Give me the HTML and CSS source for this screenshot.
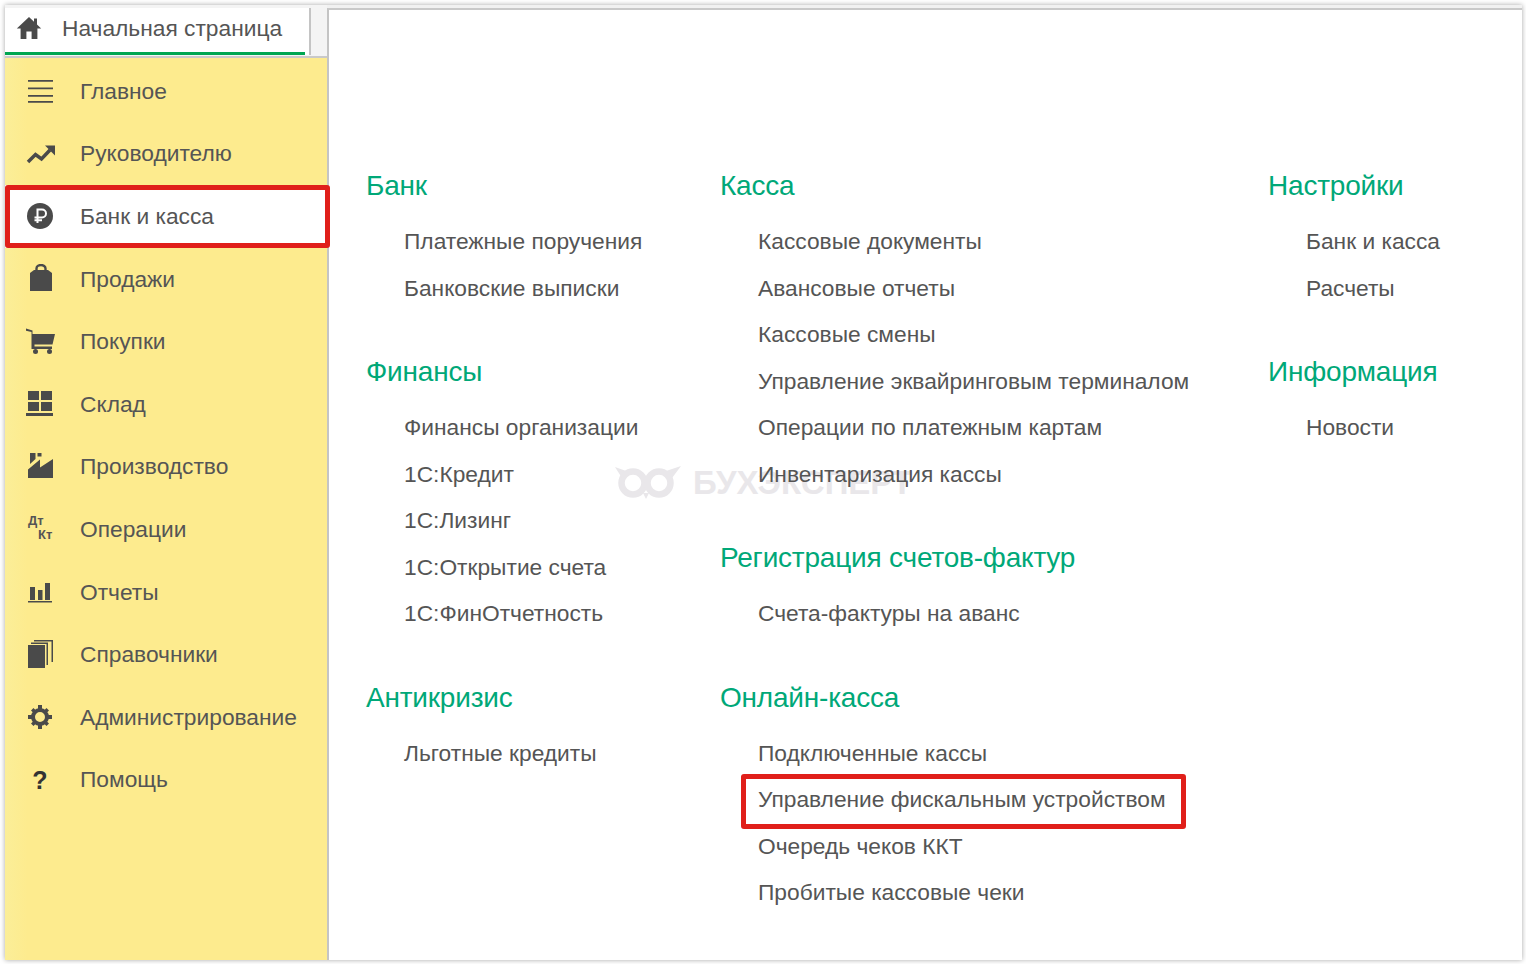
FILE: index.html
```html
<!DOCTYPE html>
<html lang="en">
<head>
  <meta charset="UTF-8">
  <title>Начальная страница</title>
  <link rel="stylesheet" href="styles.css">
</head>
<body>
  <div class="window">
    <!-- Left side: tab and sections -->
    <div class="side">
      <div class="tabs">
        <div class="tab">
          <svg class="home-icon" viewBox="0 0 26 24"><path d="M13 1 0.8 12.5H4.6V23H10.4V15.5H15.6V23H21.4V12.5H25.2L21 8.5V2.500H18V5.700Z"/></svg>
          <span>Начальная страница</span>
        </div>
      </div>
      <ul class="nav">
        <li class="nav-item">
          <svg class="nav-icon" viewBox="0 0 30 30"><path d="M3 4H28V5.800H3ZM3 11.500H28V13.300H3ZM3 19H28V20.800H3ZM3 25H28V26.800H3Z"/></svg>
          Главное
        </li>
        <li class="nav-item">
          <svg class="nav-icon" viewBox="0 0 30 30"><path d="M3 23 10.500 15.500 16.500 20 25 11" fill="none" stroke="#4a4a4a" stroke-width="3.500"/><path d="M20 6.500H30V16.500Z"/></svg>
          Руководителю
        </li>
        <li class="nav-item nav-active">
          <svg class="nav-icon" viewBox="0 0 30 30"><circle cx="15" cy="15" r="13"/><path d="M12.500 22V8.500H17a4 4 0 0 1 0 8H9.500M9.500 19.300H17" fill="none" stroke="#fff" stroke-width="2"/></svg>
          Банк и касса
        </li>
        <li class="nav-item">
          <svg class="nav-icon" viewBox="0 0 30 30"><path d="M5 9 9 6H23L27 9V27H5Z"/><path d="M11.500 9V4.500a4.500 3.500 0 0 1 9 0V9" fill="none" stroke="#4a4a4a" stroke-width="2.400"/></svg>
          Продажи
        </li>
        <li class="nav-item">
          <svg class="nav-icon" viewBox="0 0 30 30"><path d="M1 1.500 7.500 3.500V7H30L27.500 17.500H9.500V19.500H27V22H6.500V5L1 3.800Z"/><circle cx="10.500" cy="24.500" r="2.500"/><circle cx="24.500" cy="24.500" r="2.500"/></svg>
          Покупки
        </li>
        <li class="nav-item">
          <svg class="nav-icon" viewBox="0 0 30 30"><path d="M3 2H14V11H3ZM16 2H27V11H16ZM3 13H14V22H3ZM16 13H27V22H16ZM1 24H28V27H1Z"/></svg>
          Склад
        </li>
        <li class="nav-item">
          <svg class="nav-icon" viewBox="0 0 30 30"><path d="M5 1H10.500V7L5 12ZM12.500 1H16.500V4.500H12.500ZM3 26V17.500L15 7.500V15.500L28 7V26Z"/></svg>
          Производство
        </li>
        <li class="nav-item">
          <span class="nav-icon debit-credit"><b>Дт</b><b class="credit">Кт</b></span>
          Операции
        </li>
        <li class="nav-item">
          <svg class="nav-icon" viewBox="0 0 30 30"><path d="M5 10H10V23H5ZM13 13H17.500V23H13ZM20 6H25V23H20ZM3 24H27V25.600H3Z"/></svg>
          Отчеты
        </li>
        <li class="nav-item">
          <svg class="nav-icon" viewBox="0 0 30 30"><path d="M3 5H20V28H3ZM6 2.500H23V25H21.500V4H6ZM9 0H28V22H26.500V1.500H9Z"/></svg>
          Справочники
        </li>
        <li class="nav-item">
          <svg class="nav-icon" viewBox="0 0 30 30"><circle cx="15" cy="15" r="7" fill="none" stroke="#4a4a4a" stroke-width="4"/><path d="M13 3H17V7H13ZM13 23H17V27H13ZM3 13H7V17H3ZM23 13H27V17H23ZM6 8.500 8.500 6 11.500 9 9 11.500ZM18.500 21 21 18.500 24 21.500 21.500 24ZM6 21.500 9 18.500 11.500 21 8.500 24ZM18.500 9 21.500 6 24 8.500 21 11.500Z"/></svg>
          Администрирование
        </li>
        <li class="nav-item">
          <span class="nav-icon help-icon">?</span>
          Помощь
        </li>
      </ul>
    </div>

    <!-- Main panel -->
    <div class="main">
      <div class="watermark">
        <svg class="owl" viewBox="0 0 66 34"><circle cx="18" cy="17" r="11.500" fill="none" stroke="#e9e7ea" stroke-width="6.500"/><circle cx="44" cy="17" r="11.500" fill="none" stroke="#e9e7ea" stroke-width="6.500"/><path d="M0 1 14 6 7 12ZM66 0 48 6 57 12ZM28 27H34L31 33Z"/></svg>
        <span>БУХЭКСПЕРТ</span>
      </div>

      <div class="column col-1">
        <div class="group">
          <div class="group-title">Банк</div>
          <div class="link">Платежные поручения</div>
          <div class="link">Банковские выписки</div>
        </div>
        <div class="group">
          <div class="group-title">Финансы</div>
          <div class="link">Финансы организации</div>
          <div class="link">1С:Кредит</div>
          <div class="link">1С:Лизинг</div>
          <div class="link">1С:Открытие счета</div>
          <div class="link">1С:ФинОтчетность</div>
        </div>
        <div class="group">
          <div class="group-title">Антикризис</div>
          <div class="link">Льготные кредиты</div>
        </div>
      </div>

      <div class="column col-2">
        <div class="group">
          <div class="group-title">Касса</div>
          <div class="link">Кассовые документы</div>
          <div class="link">Авансовые отчеты</div>
          <div class="link">Кассовые смены</div>
          <div class="link">Управление эквайринговым терминалом</div>
          <div class="link">Операции по платежным картам</div>
          <div class="link">Инвентаризация кассы</div>
        </div>
        <div class="group">
          <div class="group-title">Регистрация счетов-фактур</div>
          <div class="link">Счета-фактуры на аванс</div>
        </div>
        <div class="group">
          <div class="group-title">Онлайн-касса</div>
          <div class="link">Подключенные кассы</div>
          <div class="link link-marked">Управление фискальным устройством</div>
          <div class="link">Очередь чеков ККТ</div>
          <div class="link">Пробитые кассовые чеки</div>
        </div>
      </div>

      <div class="column">
        <div class="group">
          <div class="group-title">Настройки</div>
          <div class="link">Банк и касса</div>
          <div class="link">Расчеты</div>
        </div>
        <div class="group">
          <div class="group-title">Информация</div>
          <div class="link">Новости</div>
        </div>
      </div>
    </div>
  </div>
</body>
</html>
```

FILE: styles.css
```css
html, body {
  margin: 0;
  padding: 0;
  height: 964px;
  overflow: hidden;
  background: #fff;
}

body {
  font-family: "Liberation Sans", Arial, sans-serif;
  color: #555;
  font-size: 22.75px;
}

.window {
  display: flex;
  height: 955px;
  margin: 5px 4px 4px 5px;
  background: #f1f1f1;
  box-shadow: 0 0 5px rgba(0, 0, 0, 0.35);
}

/* Left side */
.side {
  width: 322px;
  flex: none;
  display: flex;
  flex-direction: column;
}

.tabs {
  height: 53px;
  flex: none;
  box-sizing: border-box;
  padding-top: 3px;
  border-bottom: 2px solid #c9c9c9;
  background: #f4f4f4;
}

.tab {
  width: 306px;
  height: 47px;
  box-sizing: border-box;
  padding-left: 11px;
  display: flex;
  align-items: center;
  gap: 20px;
  background: #fff;
  border-right: 2px solid #c4c4c4;
  position: relative;
}

.tab::after {
  content: "";
  position: absolute;
  left: 0;
  right: 4px;
  bottom: 0;
  height: 3px;
  background: #00a651;
}

.home-icon {
  width: 26px;
  height: 24px;
  fill: #4a4a4a;
  margin-bottom: 8px;
}

.tab span {
  margin-bottom: 7px;
}

.nav {
  list-style: none;
  margin: 0;
  padding: 2px 0 0;
  flex: 1;
  background: linear-gradient(90deg, #fbee98, #fdeb8e 7%);
}

.nav-item {
  height: 62.6px;
  box-sizing: border-box;
  padding-left: 20px;
  display: flex;
  align-items: center;
  gap: 25px;
  position: relative;
  z-index: 1;
}

.nav-icon {
  width: 30px;
  height: 30px;
  flex: none;
  fill: #4a4a4a;
}

.debit-credit {
  display: flex;
  flex-direction: column;
  box-sizing: border-box;
  padding-left: 3px;
  font-size: 13px;
  line-height: 14px;
  color: #555;
}

.credit {
  margin-left: 10px;
}

.help-icon {
  text-align: center;
  font-weight: bold;
  color: #333;
  font-size: 25px;
  line-height: 30px;
}

.nav-active {
  background: #fff;
}

.nav-active::after {
  content: "";
  position: absolute;
  left: 0;
  right: -3px;
  top: 0;
  bottom: 0;
  border: 5px solid #e01f1a;
  border-radius: 3px;
}

/* Main panel */
.main {
  flex: 1;
  box-sizing: border-box;
  margin-top: 3px;
  padding: 143px 0 0 37px;
  display: flex;
  background: #fff;
  border-top: 2px solid #c9c9c9;
  border-left: 2px solid #c4c4c4;
  position: relative;
}

.column {
  display: flex;
  flex-direction: column;
  gap: 28px;
  position: relative;
}

.col-1 {
  width: 354px;
}

.col-2 {
  width: 548px;
}

.group-title {
  height: 65px;
  line-height: 65px;
  font-size: 28px;
  letter-spacing: -0.2px;
  color: #00a878;
}

.link {
  height: 46.5px;
  line-height: 46.5px;
  padding-left: 38px;
  position: relative;
  white-space: nowrap;
}

.link-marked::after {
  content: "";
  position: absolute;
  left: 21px;
  top: -2px;
  width: 445px;
  height: 55px;
  box-sizing: border-box;
  border: 5px solid #e01f1a;
  border-radius: 3px;
}

/* Faint logo behind the links */
.watermark {
  position: absolute;
  left: 286px;
  top: 454px;
  display: flex;
  align-items: center;
  gap: 12px;
  color: #e9e7ea;
  font-size: 33px;
  font-weight: bold;
}

.owl {
  width: 66px;
  height: 34px;
  fill: #e9e7ea;
}
```
